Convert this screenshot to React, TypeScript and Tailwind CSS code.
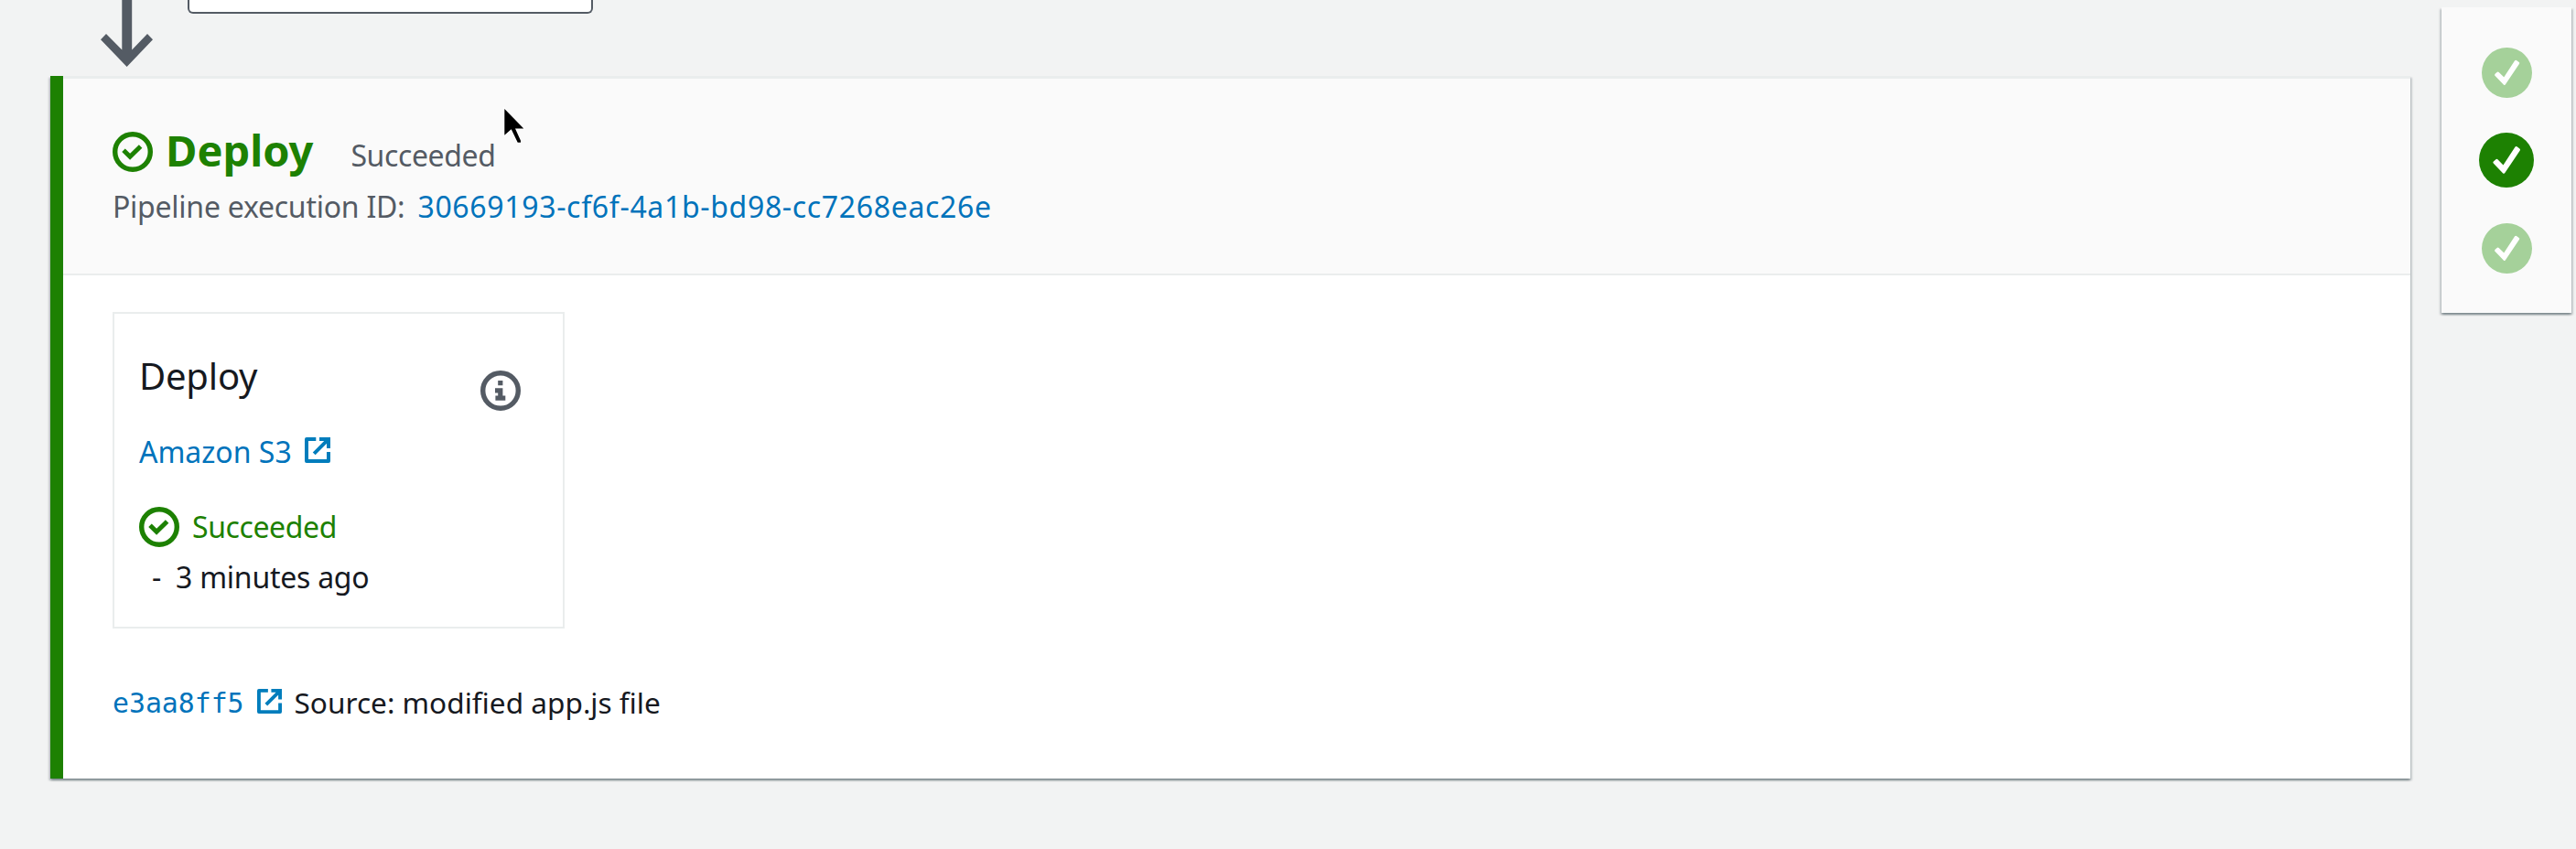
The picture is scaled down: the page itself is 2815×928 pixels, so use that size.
const SHADOW =
  'shadow-[0_2px_2px_0_rgba(0,28,36,0.3),2px_2px_2px_0_rgba(0,28,36,0.15),-2px_2px_2px_0_rgba(0,28,36,0.15)]';

function CheckCircle({ className = '' }: { className?: string }) {
  return (
    <svg className={`size-11 shrink-0 text-[#1d8102] ${className}`} viewBox="0 0 44 44" fill="none" stroke="currentColor">
      <circle cx="22" cy="22" r="19.3" strokeWidth="5.4" />
      <path d="M12 20.2l7.1 7.1L30.6 16" strokeWidth="5" />
    </svg>
  );
}

function InfoCircle({ className = '' }: { className?: string }) {
  return (
    <svg className={`size-11 shrink-0 text-[#545b64] ${className}`} viewBox="0 0 44 44" fill="none">
      <circle cx="22" cy="22" r="19.3" stroke="currentColor" strokeWidth="5.4" />
      <path d="M19.2 11h5.2v5.2h-5.2zM16 19.3h8.4v8.2h2.9v5.3H16.4v-5.3h2.8v-3H16z" fill="currentColor" />
    </svg>
  );
}

function ExternalLink({ className = '' }: { className?: string }) {
  return (
    <svg className={`shrink-0 text-[#007dbc] ${className}`} viewBox="0 0 28 28" fill="none" stroke="currentColor" strokeWidth="4">
      <path d="M12.3 2H2v24h24V16" strokeLinejoin="round" />
      <path d="M16 2h10v10M10.2 17.8L25.6 2.4" />
    </svg>
  );
}

function StageBadge({ active = false }: { active?: boolean }) {
  return (
    <svg className={active ? 'size-[60px] text-[#1d8102]' : 'size-[55px] text-[#a5d19a]'} viewBox="0 0 164 164">
      <circle cx="82" cy="82" r="82" fill="currentColor" />
      <path
        d="M46 89l7-6 20 20 38-58 8 6-45 67z"
        fill="#fff"
        stroke="#fff"
        strokeWidth="8"
        strokeLinejoin="round"
      />
    </svg>
  );
}

export default function App() {
  return (
    <div className="relative flex h-[928px] w-[2815px] overflow-hidden bg-[#f2f3f3] font-['Noto_Sans',sans-serif] text-[32px] leading-[40px] text-[#16191f]">
      <main className="ml-[55px] w-[2579px]">
        <div className="flex h-[83px] items-start">
          <svg className="ml-[55px] h-[74px] w-[57px]" viewBox="0 0 57 74" fill="#545b64">
            <path d="M23.3 0h10.9v54.5L51 37l6 6.3L28.6 73 0 43.3 6 37l17.3 17.5z" />
          </svg>
          <div className="ml-[38px] h-[15px] w-[443px] rounded-b-md border-2 border-t-0 border-[#545b64] bg-white" />
        </div>

        <section className={`flex h-[768px] bg-white ${SHADOW}`}>
          <div className="w-[14px] bg-[#1d8102]" />
          <div className="flex-1">
            <header className="h-[218px] border-y-2 border-[#eaeded] border-t-[3px] bg-[#fafafa] pt-[46px] pl-[54px]">
              <div className="flex h-16 items-baseline">
                <CheckCircle className="mt-3 self-start" />
                <h2 className="ml-[14px] text-[47px] leading-[64px] font-bold text-[#1d8102]">Deploy</h2>
                <span className="ml-[41px] tracking-[-0.4px] text-[#545b64]">Succeeded</span>
              </div>
              <div className="mt-[10px] flex">
                <span className="tracking-[-0.25px] text-[#545b64]">Pipeline execution ID:</span>
                <a className="ml-[14px] tracking-[0.66px] text-[#0073bb]">30669193-cf6f-4a1b-bd98-cc7268eac26e</a>
              </div>
            </header>

            <div className="pt-[40px] pl-[54px]">
              <article className="flex h-[346px] w-[494px] justify-between border-2 border-[#eaeded] pt-[39px] pr-[46px] pl-[27px]">
                <div>
                  <h3 className="pt-px text-[40px] leading-[56px] tracking-[-0.2px]">Deploy</h3>
                  <div className="mt-[35px] flex">
                    <a className="text-[#0073bb]">Amazon S3</a>
                    <ExternalLink className="mt-[4px] ml-[14px] size-7" />
                  </div>
                  <div className="mt-[40px] flex h-[44px]">
                    <CheckCircle />
                    <span className="mt-[2px] ml-[14px] tracking-[-0.4px] text-[#1d8102]">Succeeded</span>
                  </div>
                  <div className="mt-[13px] flex tracking-[-0.25px]">
                    <span className="ml-[14px]">-</span>
                    <span className="ml-[16px]">3 minutes ago</span>
                  </div>
                </div>
                <InfoCircle className="mt-[23px]" />
              </article>

              <div className="mt-[61px] flex">
                <a className="mt-px font-['DejaVu_Sans_Mono',monospace] text-[29.8px] text-[#0073bb]">e3aa8ff5</a>
                <ExternalLink className="mt-[5px] ml-[14px] size-[27px]" />
                <span className="ml-[14px] text-[31.6px]">Source: modified app.js file</span>
              </div>
            </div>
          </div>
        </section>
      </main>

      <aside
        className={`mt-2 ml-[34px] flex h-[334px] w-[142px] flex-col items-center bg-[#fafafa] pt-[44px] ${SHADOW}`}
      >
        <StageBadge />
        <div className="mt-[38px] mb-[39px] h-[60px]">
          <StageBadge active />
        </div>
        <StageBadge />
      </aside>

      <svg className="absolute top-[116px] left-[548px] h-[45px] w-[28px]" viewBox="0 0 28 45">
        <path
          d="M3.3 3v28.7l7.4-6.4 7 14.4h3.3v-2L15 24.5h9.3z"
          fill="#000"
          stroke="#fff"
          strokeWidth="2"
          paintOrder="stroke"
        />
      </svg>
    </div>
  );
}
